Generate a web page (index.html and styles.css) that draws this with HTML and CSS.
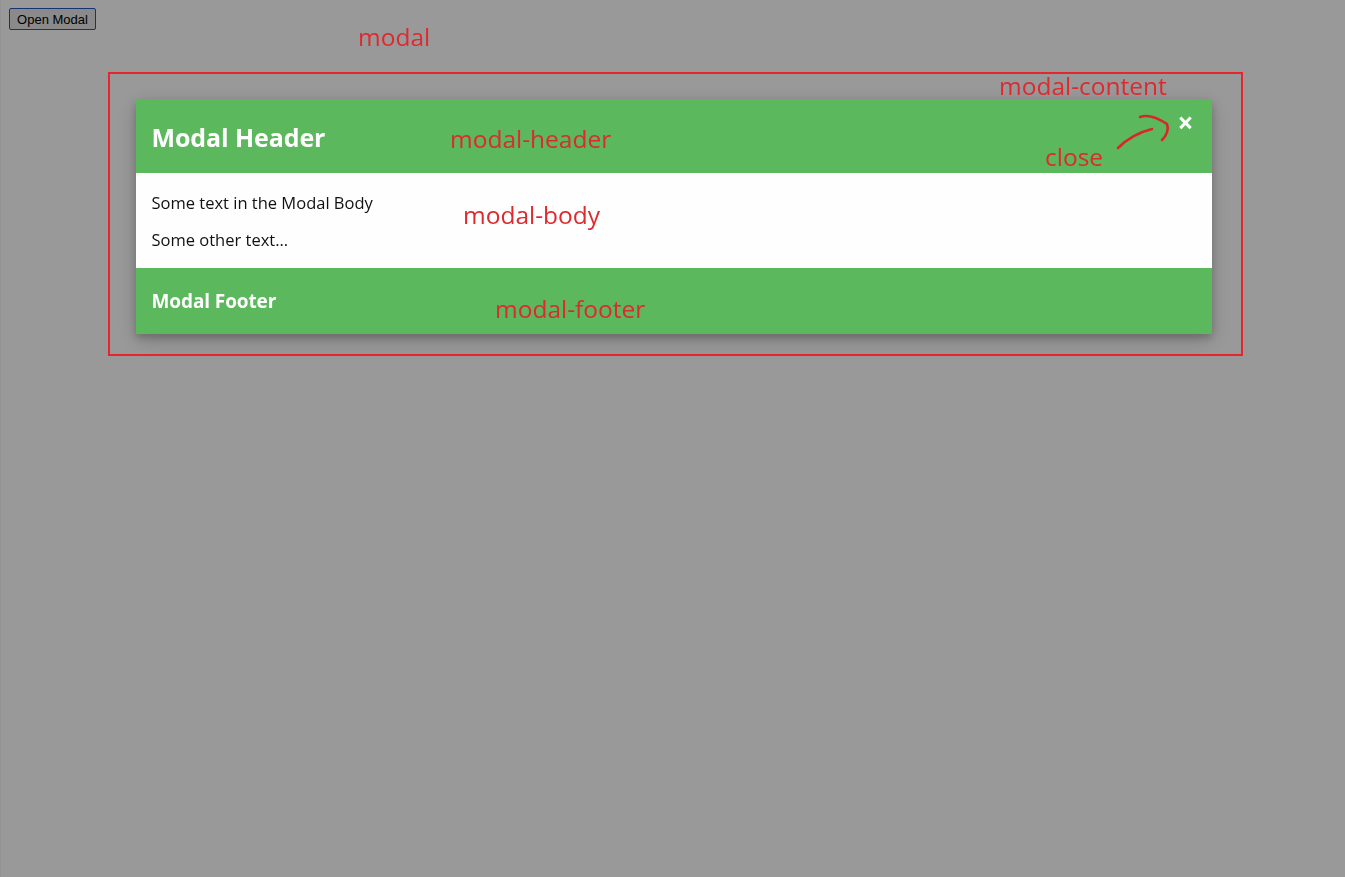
FILE: index.html
```html
<!DOCTYPE html>
<html>
<head>
<meta charset="utf-8">
<link rel="stylesheet" href="styles.css">
</head>
<body>
<button class="open-btn">Open Modal</button>

<div class="modal">
  <div class="modal-content">
    <div class="modal-header">
      <h2 class="title">Modal Header</h2>
      <span class="close">&times;</span>
    </div>
    <div class="modal-body">
      <p>Some text in the Modal Body</p>
      <p>Some other text...</p>
    </div>
    <div class="modal-footer">
      <h3 class="footer-title">Modal Footer</h3>
    </div>
  </div>
</div>

<div class="annotations">
  <div class="frame"></div>
  <span class="note note-modal">modal</span>
  <span class="note note-content">modal-content</span>
  <span class="note note-header">modal-header</span>
  <span class="note note-close">close</span>
  <span class="note note-body">modal-body</span>
  <span class="note note-footer">modal-footer</span>
  <svg class="arrow" width="70" height="50" viewBox="0 0 70 50">
    <path d="M4 38 C10 32, 22 23, 38 19" fill="none" stroke="#d8262b" stroke-width="2.6" stroke-linecap="round"/>
    <path d="M26 7 C34 4, 44 8, 53 14 C55 20, 52 26, 48 30" fill="none" stroke="#d8262b" stroke-width="2.6" stroke-linecap="round"/>
  </svg>
</div>
</body>
</html>
```

FILE: styles.css
```css
html, body {
  margin: 0;
  padding: 0;
  height: 100%;
}

body {
  background: #ffffff;
  font-family: "Open Sans", "Noto Sans", sans-serif;
  border-left: 1px solid #f4f4f4;
  box-sizing: border-box;
}

.open-btn {
  margin: 8px 0 0 8px;
  padding: 1px 6px;
  font-family: "Liberation Sans", Arial, sans-serif;
  font-size: 13px;
  height: 22px;
  width: 87px;
  background: #e6e6e6;
  border: 1px solid #2a55b8;
  border-radius: 2px;
  color: #000;
}

.modal {
  position: fixed;
  inset: 0;
  background: rgba(0, 0, 0, 0.4);
  padding-top: 99px;
  box-sizing: border-box;
}

.modal-content {
  width: 1076px;
  margin: 0 auto;
  transform: translateX(1px);
  background: #fefefe;
  box-shadow: 0 4px 8px rgba(0, 0, 0, 0.2), 0 6px 20px rgba(0, 0, 0, 0.19);
}

.modal-header {
  height: 74px;
  padding: 0 16px;
  background: #5cb85c;
  color: #fff;
  display: flex;
  align-items: center;
  justify-content: space-between;
}

.title {
  margin: 1px 0 0;
  font-size: 25px;
  font-weight: 700;
  line-height: 30px;
  letter-spacing: -0.1px;
}

.close {
  align-self: flex-start;
  margin-top: 5px;
  margin-right: 2px;
  font-size: 28px;
  font-weight: 700;
  line-height: 36px;
  color: #fff;
}

.modal-body {
  padding: 3px 16px 2px;
  color: #111;
  font-size: 16.5px;
}

.modal-body p {
  margin: 16px 0;
  line-height: 21px;
}

.modal-footer {
  height: 66px;
  padding: 0 16px;
  background: #5cb85c;
  color: #fff;
  display: flex;
  align-items: center;
}

.footer-title {
  margin: 0;
  font-size: 19px;
  font-weight: 700;
  letter-spacing: -0.1px;
}

.annotations {
  position: fixed;
  inset: 0;
  pointer-events: none;
}

.frame {
  position: absolute;
  left: 108px;
  top: 72px;
  width: 1131px;
  height: 280px;
  border: 2px solid #e5262c;
}

.note {
  position: absolute;
  color: #dd2a2f;
  font-family: "Open Sans", "Noto Sans", sans-serif;
  font-size: 24.5px;
  line-height: 28px;
  white-space: nowrap;
}

.note-modal { left: 358px; top: 23px; }
.note-content { left: 999px; top: 72px; }
.note-header { left: 450px; top: 125px; }
.note-close { left: 1045px; top: 143px; }
.note-body { left: 463px; top: 201px; }
.note-footer { left: 495px; top: 295px; }

.arrow {
  position: absolute;
  left: 1114px;
  top: 110px;
}
```
